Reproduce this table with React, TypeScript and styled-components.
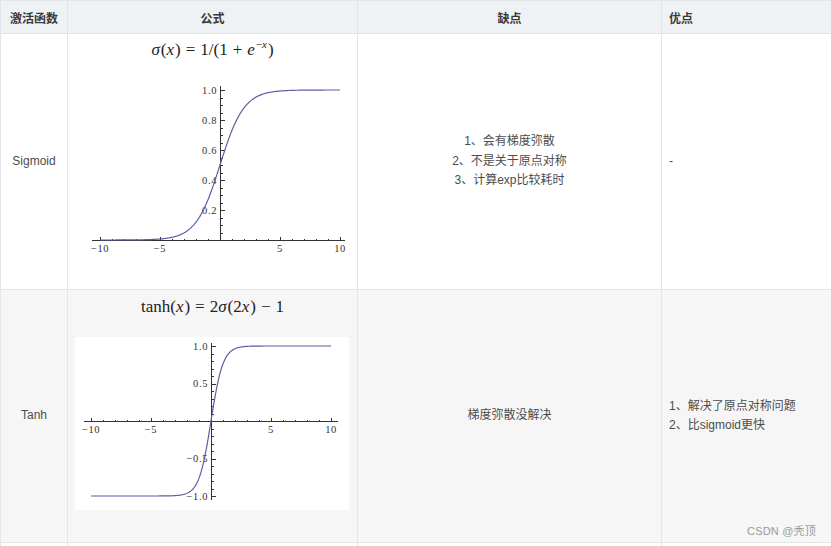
import React from "react";
import styled, { createGlobalStyle } from "styled-components";

const GlobalStyle = createGlobalStyle`
  html, body {
    margin: 0;
    padding: 0;
    background: #fff;
    overflow: hidden;
  }
  body {
    font-family: "Liberation Sans", "Noto Sans CJK SC", sans-serif;
  }
`;

const Page = styled.div`
  position: relative;
  width: 831px;
  height: 546px;
  overflow: hidden;
  background: #fff;
`;

const Table = styled.table`
  width: 846px;
  border-collapse: collapse;
  table-layout: fixed;
  font-size: 12px;
  color: #4d4d4d;
`;

const HeadCell = styled.th<{ $align?: "left" | "center" }>`
  height: 32px;
  padding: 0 7px;
  background: #eff2f5;
  border: 1px solid #e3e5e8;
  font-weight: 700;
  color: #3a3a3a;
  text-align: ${(p) => p.$align ?? "center"};
`;

const Row = styled.tr<{ $striped?: boolean }>`
  background: ${(p) => (p.$striped ? "#f6f6f6" : "#fff")};
`;

const Cell = styled.td<{ $align?: "left" | "center"; $h: number }>`
  height: ${(p) => p.$h}px;
  border: 1px solid #e3e5e8;
  padding: 0 7px;
  text-align: ${(p) => p.$align ?? "center"};
  vertical-align: middle;
  line-height: 19.5px;
`;

const FormulaCell = styled.td`
  border: 1px solid #e3e5e8;
  padding: 0 7px;
  vertical-align: top;
`;

const Formula = styled.div<{ $top: number }>`
  margin-top: ${(p) => p.$top}px;
  height: 20px;
  font-family: "Liberation Serif", "DejaVu Serif", serif;
  font-size: 17px;
  line-height: 20px;
  color: #222;
  text-align: center;
  white-space: nowrap;

  i {
    font-style: italic;
    padding-right: 1px;
  }
  sup {
    font-size: 11px;
    vertical-align: 7px;
    line-height: 0;
  }
`;

const Op = styled.span`
  padding: 0 5px;
`;

const ChartFrame = styled.svg<{ $top: number }>`
  display: block;
  margin-top: ${(p) => p.$top}px;
`;

const Watermark = styled.div`
  position: absolute;
  right: 15px;
  bottom: 8px;
  font-size: 11px;
  color: #9a9a9a;
  letter-spacing: 0.2px;
`;

type Plot = {
  w: number;
  h: number;
  ox: number;
  oy: number;
  xs: number;
  ys: number;
  xFrom: number;
  xTo: number;
  yFrom: number;
  yTo: number;
  minorY: number;
  majorY: number;
  yLabels: { v: number; t: string }[];
  fn: (x: number) => number;
};

const sigmoidPlot: Plot = {
  w: 274,
  h: 210,
  ox: 145,
  oy: 176,
  xs: 12,
  ys: 150,
  xFrom: 17,
  xTo: 270,
  yFrom: 22,
  yTo: 177,
  minorY: 0.05,
  majorY: 0.2,
  yLabels: [
    { v: 0.2, t: "0.2" },
    { v: 0.4, t: "0.4" },
    { v: 0.6, t: "0.6" },
    { v: 0.8, t: "0.8" },
    { v: 1.0, t: "1.0" },
  ],
  fn: (x) => 1 / (1 + Math.exp(-x)),
};

const tanhPlot: Plot = {
  w: 274,
  h: 173,
  ox: 136,
  oy: 84,
  xs: 12,
  ys: 75,
  xFrom: 9,
  xTo: 263,
  yFrom: 6,
  yTo: 163,
  minorY: 0.1,
  majorY: 0.5,
  yLabels: [
    { v: -1, t: "\u22121.0" },
    { v: -0.5, t: "\u22120.5" },
    { v: 0.5, t: "0.5" },
    { v: 1, t: "1.0" },
  ],
  fn: (x) => Math.tanh(x),
};

const Chart: React.FC<{ plot: Plot; top: number }> = ({ plot, top }) => {
  const p = plot;
  const X = (v: number) => p.ox + v * p.xs;
  const Y = (v: number) => p.oy - v * p.ys;

  const pts: string[] = [];
  for (let i = 0; i <= 400; i++) {
    const v = -10 + i * 0.05;
    pts.push(`${X(v).toFixed(2)},${Y(p.fn(v)).toFixed(2)}`);
  }

  const xTicks: number[] = [];
  for (let v = -10; v <= 10; v++) if (v !== 0) xTicks.push(v);

  const yTicks: number[] = [];
  const yMin = (p.oy - p.yTo) / p.ys;
  const yMax = (p.oy - p.yFrom) / p.ys;
  const steps = Math.round(1 / p.minorY);
  for (let k = Math.ceil(yMin * steps); k <= Math.floor(yMax * steps); k++) {
    if (k !== 0) yTicks.push(k / steps);
  }
  const isMajor = (v: number) => Math.abs(v / p.majorY - Math.round(v / p.majorY)) < 1e-6;

  return (
    <ChartFrame $top={top} width={p.w} height={p.h} viewBox={`0 0 ${p.w} ${p.h}`}>
      <rect x={0} y={0} width={p.w} height={p.h} fill="#fff" />
      <g stroke="#333" strokeWidth={1} shapeRendering="crispEdges">
        <line x1={p.xFrom} y1={p.oy + 0.5} x2={p.xTo} y2={p.oy + 0.5} />
        <line x1={p.ox + 0.5} y1={p.yFrom} x2={p.ox + 0.5} y2={p.yTo} />
        {xTicks.map((v) => (
          <line
            key={`x${v}`}
            x1={X(v) + 0.5}
            x2={X(v) + 0.5}
            y1={p.oy + 0.5}
            y2={p.oy + 0.5 - (v % 5 === 0 ? 4 : 2)}
          />
        ))}
        {yTicks.map((v) => (
          <line
            key={`y${v}`}
            x1={p.ox + 0.5}
            x2={p.ox + 0.5 + (isMajor(v) ? 4 : 2)}
            y1={Y(v) + 0.5}
            y2={Y(v) + 0.5}
          />
        ))}
      </g>
      <g fontFamily='"Liberation Serif", serif' fontSize={10.5} fill="#333" letterSpacing={0.6}>
        {[-10, -5, 5, 10].map((v) => (
          <text key={`xl${v}`} x={X(v)} y={p.oy + 12} textAnchor="middle">
            {v < 0 ? `\u2212${-v}` : v}
          </text>
        ))}
        {p.yLabels.map((l) => (
          <text key={`yl${l.v}`} x={p.ox - 3} y={Y(l.v) + 3.5} textAnchor="end">
            {l.t}
          </text>
        ))}
      </g>
      <polyline points={pts.join(" ")} fill="none" stroke="#5d5da6" strokeWidth={1.2} />
    </ChartFrame>
  );
};

const App: React.FC = () => (
  <Page>
    <GlobalStyle />
    <Table>
      <colgroup>
        <col style={{ width: 67 }} />
        <col style={{ width: 290 }} />
        <col style={{ width: 304 }} />
        <col />
      </colgroup>
      <thead>
        <tr>
          <HeadCell>激活函数</HeadCell>
          <HeadCell>公式</HeadCell>
          <HeadCell>缺点</HeadCell>
          <HeadCell $align="left">优点</HeadCell>
        </tr>
      </thead>
      <tbody>
        <Row>
          <Cell $h={255}>Sigmoid</Cell>
          <FormulaCell>
            <Formula $top={6}>
              <i>σ</i>(<i>x</i>)<Op>=</Op>1/(1<Op>+</Op>
              <i>e</i>
              <sup>
                −<i>x</i>
              </sup>
              )
            </Formula>
            <Chart plot={sigmoidPlot} top={4} />
          </FormulaCell>
          <Cell $h={255}>
            1、会有梯度弥散
            <br />
            2、不是关于原点对称
            <br />
            3、计算exp比较耗时
          </Cell>
          <Cell $h={255} $align="left">
            -
          </Cell>
        </Row>
        <Row $striped>
          <Cell $h={252}>Tanh</Cell>
          <FormulaCell>
            <Formula $top={7}>
              tanh(<i>x</i>)<Op>=</Op>2<i>σ</i>(2<i>x</i>)<Op>−</Op>1
            </Formula>
            <Chart plot={tanhPlot} top={20} />
          </FormulaCell>
          <Cell $h={252}>梯度弥散没解决</Cell>
          <Cell $h={252} $align="left">
            1、解决了原点对称问题
            <br />
            2、比sigmoid更快
          </Cell>
        </Row>
        <Row>
          <Cell $h={20} />
          <FormulaCell />
          <Cell $h={20} />
          <Cell $h={20} />
        </Row>
      </tbody>
    </Table>
    <Watermark>CSDN @秃顶</Watermark>
  </Page>
);

export default App;
